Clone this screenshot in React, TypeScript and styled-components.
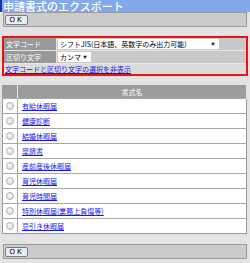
import styled, { createGlobalStyle } from "styled-components";

const GlobalStyle = createGlobalStyle`
  html, body {
    margin: 0;
    padding: 0;
    background: #e3e3e3;
  }
  body {
    font-family: "Noto Sans CJK JP", "DejaVu Sans", sans-serif;
    font-size: 7px;
    line-height: 1;
    color: #000;
  }
`;

const Page = styled.div`
  width: 250px;
  height: 263px;
  display: flex;
  flex-direction: column;
  overflow: hidden;
`;

const TitleBar = styled.div`
  flex: none;
  height: 12px;
  background: #83a9ea;
  border-left: 2px solid #1f2fa8;
  color: #fff;
  font-size: 11px;
  font-weight: 500;
  line-height: 12px;
  padding-left: 1px;
  white-space: nowrap;
  overflow: hidden;
`;

const Toolbar = styled.div<{ $top?: number }>`
  flex: none;
  height: 13px;
  margin: ${(p) => p.$top ?? 0}px 3px 0 3px;
  background: #cbcbcb;
  border: 1px solid #9a9a9a;
  display: flex;
  align-items: center;
  padding-left: 1px;
`;

const Button = styled.button`
  height: 10px;
  width: 23px;
  padding: 0;
  display: flex;
  align-items: center;
  justify-content: center;
  background: #ececec;
  border: 1px solid #7d7d7d;
  border-radius: 2px;
  font-family: "DejaVu Sans", sans-serif;
  font-size: 7px;
  line-height: 8px;
  letter-spacing: 2px;
  color: #000;
`;

const SettingBox = styled.div`
  flex: none;
  margin: 9px 2px 0 2px;
  border: 2px solid #ee1111;
  background: #dcdcdc;
  display: flex;
  flex-direction: column;
`;

const SettingRow = styled.div`
  display: flex;
  height: 12px;
  border-bottom: 1px solid #e6e6e6;
`;

const Label = styled.div`
  width: 50px;
  background: #999999;
  color: #fff;
  padding-left: 2px;
  line-height: 12px;
  white-space: nowrap;
  border-right: 1px solid #e6e6e6;
`;

const Value = styled.div`
  flex: 1;
  background: #c9c9c9;
  display: flex;
  align-items: center;
  padding-left: 1px;
`;

const Select = styled.div<{ $w: number }>`
  width: ${(p) => p.$w}px;
  height: 10px;
  background: #fff;
  display: flex;
  align-items: center;
  justify-content: space-between;
  padding: 0 4px 0 2px;
  box-sizing: border-box;
  line-height: 10px;
  white-space: nowrap;
  overflow: hidden;
`;

const Arrow = styled.span`
  font-size: 4px;
  color: #222;
`;

const ToggleLink = styled.a`
  color: #1515ee;
  text-decoration: underline;
  height: 10px;
  line-height: 10px;
  padding-left: 1px;
  white-space: nowrap;
`;

const Table = styled.table`
  flex: none;
  margin: 9px 3px 0 2px;
  border-collapse: collapse;
  width: 245px;
  background: #fff;
  border: 1px solid #9a9a9a;
`;

const Th = styled.th<{ $narrow?: boolean }>`
  height: 12px;
  background: #9c9c9c;
  color: #fff;
  font-weight: normal;
  padding: 0;
  line-height: 12px;
  width: ${(p) => (p.$narrow ? "14px" : "auto")};
  border-right: 1px solid #e3e3e3;
`;

const Tr = styled.tr`
  height: 14px;
  border-top: 1px solid #a8a8a8;
`;

const RadioCell = styled.td`
  width: 14px;
  height: 14px;
  padding: 0;
  text-align: center;
  border-right: 1px solid #a8a8a8;
  line-height: 0;
`;

const Radio = styled.span`
  display: inline-block;
  width: 6px;
  height: 6px;
  border-radius: 50%;
  border: 1px solid #b4b4b4;
  background: radial-gradient(circle at 40% 40%, #fafafa, #d2d2d2);
`;

const NameCell = styled.td`
  padding: 0 0 0 4px;
  height: 14px;
  line-height: 14px;
  white-space: nowrap;
`;

const NameLink = styled.a`
  color: #1515ee;
  text-decoration: underline;
`;

const forms = [
  "有給休暇届",
  "健康診断",
  "結婚休暇届",
  "稟請書",
  "産前産後休暇届",
  "育児休暇届",
  "育児時間届",
  "特別休暇届(業務上負傷等)",
  "忌引き休暇届",
];

export default function App() {
  return (
    <Page>
      <GlobalStyle />
      <TitleBar>申請書式のエクスポート</TitleBar>
      <Toolbar>
        <Button>OK</Button>
      </Toolbar>
      <SettingBox>
        <SettingRow>
          <Label>文字コード</Label>
          <Value>
            <Select $w={161}>
              <span>シフトJIS(日本語、英数字のみ出力可能)</span>
              <Arrow>▼</Arrow>
            </Select>
          </Value>
        </SettingRow>
        <SettingRow>
          <Label>区切り文字</Label>
          <Value>
            <Select $w={33}>
              <span>カンマ</span>
              <Arrow>▼</Arrow>
            </Select>
          </Value>
        </SettingRow>
        <ToggleLink href="#">文字コードと区切り文字の選択を非表示</ToggleLink>
      </SettingBox>
      <Table>
        <thead>
          <tr>
            <Th $narrow />
            <Th>書式名</Th>
          </tr>
        </thead>
        <tbody>
          {forms.map((f) => (
            <Tr key={f}>
              <RadioCell>
                <Radio />
              </RadioCell>
              <NameCell>
                <NameLink href="#">{f}</NameLink>
              </NameCell>
            </Tr>
          ))}
        </tbody>
      </Table>
      <Toolbar $top={10}>
        <Button>OK</Button>
      </Toolbar>
    </Page>
  );
}
